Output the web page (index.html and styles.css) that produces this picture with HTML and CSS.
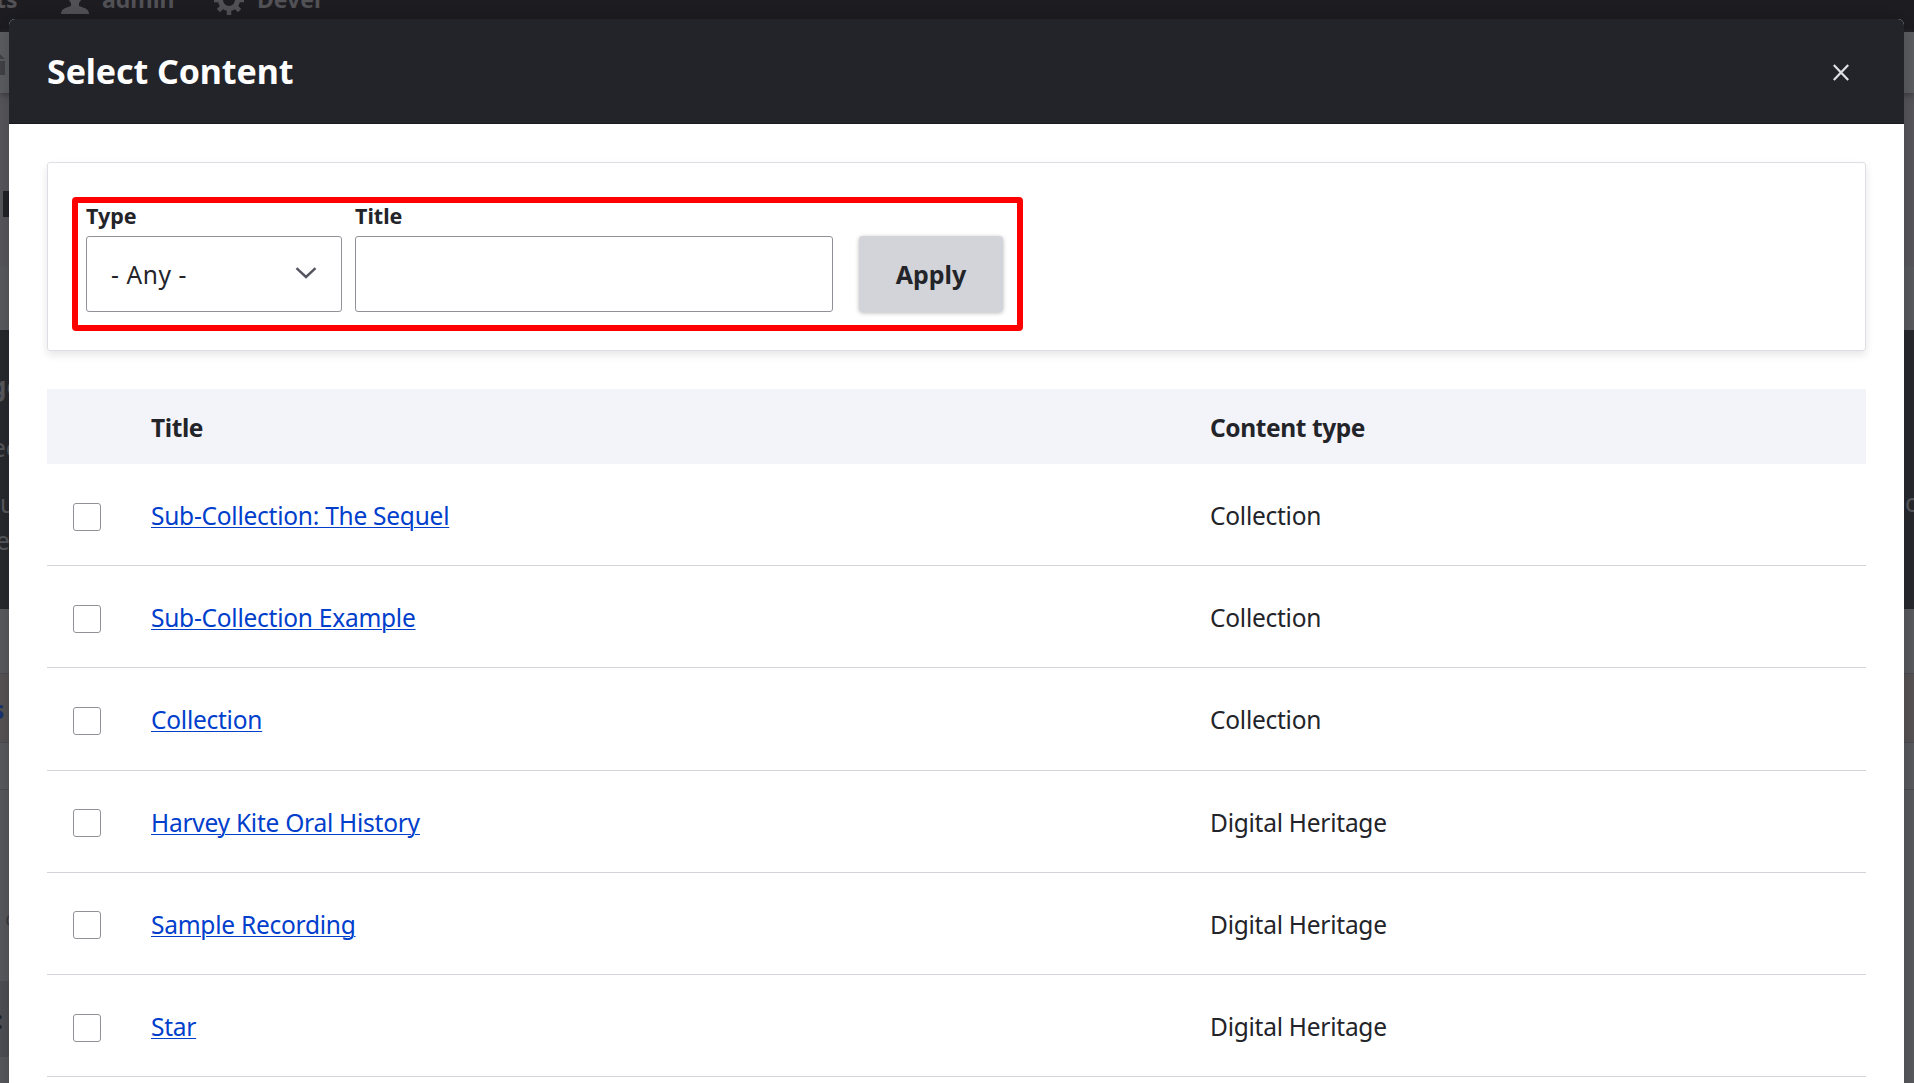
FILE: index.html
```
<!DOCTYPE html>
<html lang="en">
<head>
<meta charset="utf-8">
<title>Select Content</title>
<link rel="stylesheet" href="styles.css">
</head>
<body>
<div class="page">
  <div class="toolbar">
    <span class="tool tool-first">ts</span>
    <span class="tool tool-admin"><svg class="user" viewBox="0 0 30 28"><path d="M1 28c0-5 4-6 10-8v-3C8 14 8 10 8 7c0-5 3-7 7-7s7 2 7 7c0 3 0 7-3 10v3c6 2 10 3 10 8z"/></svg>admin</span>
    <span class="tool tool-devel"><svg class="gear" viewBox="0 0 30 30"><circle cx="15" cy="15" r="8.5" fill="none" stroke="currentColor" stroke-width="5"/><path d="M15 0v6M15 24v6M0 15h6M24 15h6M4.400 4.400l4.200 4.200M21.400 21.400l4.200 4.200M4.400 25.600l4.200-4.200M21.400 8.600l4.200-4.200" stroke="currentColor" stroke-width="4.500"/></svg>Devel</span>
  </div>
  <div class="tray"><svg class="home" viewBox="0 0 5 21"><path d="M0 0l5 5H0zM0 7h5v14H0z"/></svg></div>
  <div class="masthead"><span class="mark"></span></div>
  <div class="gap"></div>
  <div class="message">
    <div class="lines"><b class="line-a">ge</b><span class="line-b">ec</span><span class="line-c">u</span><span class="line-d">e</span></div>
    <span class="line-r">or</span>
  </div>
  <div class="space"></div>
  <div class="tab"><b>s</b></div>
  <div class="under"></div>
  <div class="body"><span>c</span></div>
  <div class="footer"><b>:</b></div>
</div>
<div class="dialog" role="dialog" aria-label="Select Content">
  <header class="dialog-head">
    <h1>Select Content</h1>
    <button class="close" aria-label="Close"><svg viewBox="0 0 16 17"><path d="M.8 1l14.400 15M15.200 1L.8 16" stroke="currentColor" stroke-width="2.300"/></svg></button>
  </header>
  <main class="dialog-body">
    <form class="filters">
      <div class="field type"><label>Type</label><div class="control select"><span>- Any -</span><svg viewBox="0 0 22 12"><path d="M1.500 1.200L11 10l9.500-8.800" fill="none" stroke="currentColor" stroke-width="2.400"/></svg></div></div>
      <div class="field title"><label>Title</label><div class="control"></div></div>
      <button class="apply" type="button">Apply</button>
      <div class="highlight"></div>
    </form>
    <div class="table">
      <div class="row head"><span></span><span>Title</span><span>Content type</span></div>
      <div class="row"><i class="check"></i><a>Sub-Collection: The Sequel</a><span>Collection</span></div>
      <div class="row"><i class="check"></i><a>Sub-Collection Example</a><span>Collection</span></div>
      <div class="row"><i class="check"></i><a>Collection</a><span>Collection</span></div>
      <div class="row"><i class="check"></i><a>Harvey Kite Oral History</a><span>Digital Heritage</span></div>
      <div class="row"><i class="check"></i><a>Sample Recording</a><span>Digital Heritage</span></div>
      <div class="row"><i class="check"></i><a>Star</a><span>Digital Heritage</span></div>
    </div>
  </main>
</div>
</body>
</html>
```
FILE: styles.css
```
* { box-sizing: border-box; }
body { margin: 0; height: 1083px; overflow: hidden; position: relative; background: #5b5c60; color: #232429; font: 24.5px/36px "Noto Sans", sans-serif; }
svg { display: block; }
a, span, label, h1, b { white-space: nowrap; }

/* dimmed page behind the dialog */
.page { height: 1083px; overflow: hidden; color: #5b5c60; }
.toolbar { height: 32px; background: #1e1d22; display: flex; font-size: 23px; font-weight: 700; line-height: 32px; color: #535358; }
.tool { display: flex; height: 32px; margin-top: -17px; }
.tool-first { width: 60px; margin-left: -4px; }
.tool-admin { width: 158px; }
.tool-admin .user { width: 30px; height: 28px; margin: 3px 12px 0 4px; fill: currentColor; }
.tool-devel .gear { width: 30px; height: 30px; margin: 2px 13px 0 0; }
.tray { height: 61px; background: #5f6064; box-shadow: 0 2px 6px #3e3e42; position: relative; padding-top: 22px; }
.home { width: 5px; height: 21px; fill: #444448; }
.masthead { height: 174px; background: #5a595e; padding: 98px 0 0 3px; }
.mark { display: block; width: 6px; height: 26px; background: #232429; }
.gap { height: 63px; background: #5c5d61; }
.message { height: 279px; background: #292a30; display: flex; justify-content: space-between; }
.lines { display: flex; flex-direction: column; margin-left: -8px; }
.line-a { font-size: 26px; margin: 38px 0 0 -2px; }
.line-b { margin-top: 26px; }
.line-c { margin: 20px 0 0 8px; }
.line-d { margin: 1px 0 0 4px; }
.line-r { margin: 155px -16px 0 0; }
.space { height: 64px; background: #5c5d61; }
.tab { height: 70px; background: #5a5658; border: solid #504e51; border-width: 1px 0; padding-top: 18px; color: #1c3474; }
.tab b { margin-left: -8px; }
.under { height: 47px; border-bottom: 1px solid #505155; background: #5c5d61; }
.body { height: 191px; background: #5b5c60; padding: 111px 0 0 5px; color: #3d3e42; font-size: 20px; }
.footer { height: 76px; width: 50%; background: #515257; padding-top: 21px; color: #232429; }
.footer b { margin-left: -4px; }

/* dialog window */
.dialog { position: absolute; left: 9px; top: 19px; width: 1895px; height: 1100px; border-radius: 6px 6px 0 0; background: #fff; box-shadow: 0 0 24px rgba(0,0,0,.25); overflow: hidden; }
.dialog-head { height: 105px; background: #232429; border-bottom: 1px solid #1a1a1e; display: flex; align-items: center; justify-content: space-between; padding: 0 55px 0 38px; color: #fff; }
h1 { margin: 0; font-size: 34px; line-height: 44px; font-weight: 700; letter-spacing: -.1px; }
.close { border: 0; background: none; padding: 0; color: #dedfe4; }
.close svg { width: 16px; height: 17px; margin-top: 2px; }
.dialog-body { padding: 38px; }
.filters { position: relative; height: 189px; border: 1px solid #dedfe4; border-radius: 3px; box-shadow: 0 4px 8px rgba(0,0,0,.1); padding: 39px 0 0 38px; display: flex; align-items: flex-start; margin-bottom: 38px; }
.field { display: flex; flex-direction: column; }
label { font-size: 21.5px; line-height: 28px; height: 34px; font-weight: 700; }
.control { height: 76px; border: 1px solid #919297; border-radius: 3px; }
.type { width: 256px; margin-right: 13px; }
.title { width: 478px; margin-right: 26px; }
.select { display: flex; align-items: center; justify-content: space-between; padding: 2px 24px 0 24px; }
.select span { letter-spacing: .6px; }
.select svg { width: 22px; height: 12px; margin-top: -4px; color: #545560; }
.apply { width: 144px; height: 76px; margin-top: 34px; border: 0; border-radius: 4px; background: #d3d4d9; color: #232429; font: 700 25px/36px "Noto Sans", sans-serif; padding: 0; box-shadow: 0 1px 4px rgba(0,0,0,.28); }
.highlight { position: absolute; left: 24px; top: 34px; width: 951px; height: 134px; border: 6px solid #f00; border-radius: 4px; }
.row { display: grid; grid-template-columns: 104px 1059px 1fr; align-items: center; height: 102.2px; border-bottom: 1px solid #d3d4d9; padding-top: 3px; letter-spacing: -.25px; }
.row.head { height: 75px; border: 0; background: #f3f4f9; font-weight: 700; padding-top: 2px; letter-spacing: -.4px; }
.check { width: 28px; height: 28px; margin: 1px 0 0 26px; border: 1px solid #919297; border-radius: 3px; }
.row a { justify-self: start; color: #003ecc; text-decoration: underline; text-decoration-thickness: 1px; text-underline-offset: 2px; }
```
